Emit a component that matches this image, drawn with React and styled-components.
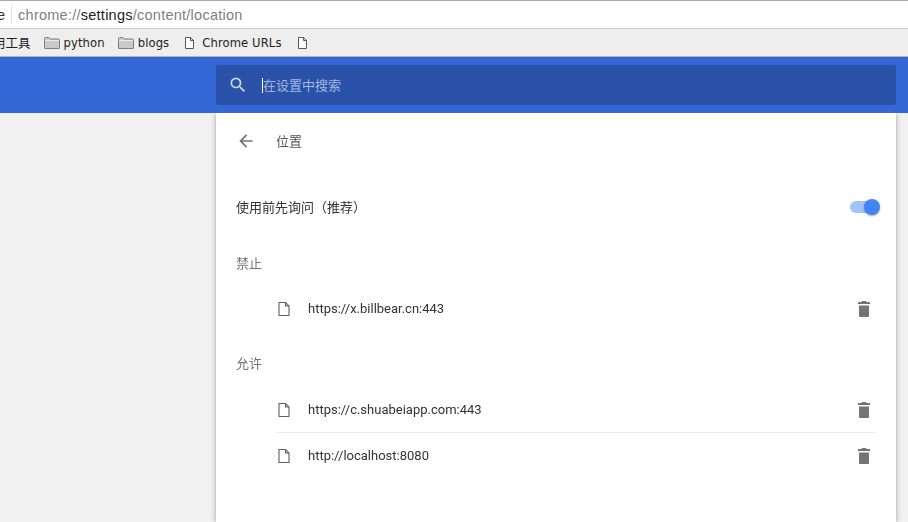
import React from "react";
import styled, { createGlobalStyle } from "styled-components";

const cjk = `Roboto, "Noto Sans CJK SC", sans-serif`;

const GlobalStyle = createGlobalStyle`
  html, body {
    margin: 0;
    padding: 0;
    height: 100%;
    overflow: hidden;
    background: #f1f1f1;
    font-family: ${cjk};
  }
`;

const Page = styled.div`
  display: flex;
  flex-direction: column;
  width: 908px;
  height: 522px;
  overflow: hidden;
  will-change: opacity;
`;

const AddressBar = styled.div`
  display: flex;
  align-items: center;
  flex: none;
  height: 27px;
  background: #fff;
  border-top: 1px solid #a9a9a9;
  border-bottom: 1px solid #cfcfcf;
  overflow: hidden;
`;

const CutOffLabel = styled.span`
  flex: none;
  margin-left: -3px;
  margin-right: 6px;
  font-family: "Liberation Sans", sans-serif;
  font-size: 14.500px;
  color: #333;
`;

const Divider = styled.span`
  flex: none;
  width: 1px;
  height: 19px;
  margin-right: 6px;
  background: #e2e2e2;
`;

const Url = styled.span`
  font-family: "Liberation Sans", sans-serif;
  font-size: 14.500px;
  letter-spacing: 0.25px;
  color: #808080;

  b {
    font-weight: 400;
    color: #222;
  }
`;

const BookmarksBar = styled.div`
  display: flex;
  align-items: center;
  flex: none;
  height: 27px;
  background: #eeeeee;
  border-bottom: 1px solid #b5b5b5;
  overflow: hidden;
  font-family: "DejaVu Sans", "Noto Sans CJK SC", sans-serif;
  font-size: 11.600px;
  letter-spacing: 0.1px;
  color: #222;
`;

const Bookmark = styled.div`
  display: flex;
  align-items: center;
  flex: none;
  gap: ${(p) => p.$gap || 4}px;
  margin-left: ${(p) => p.$left || 0}px;
`;

const CutOffBookmark = styled.div`
  flex: none;
  margin-left: -7px;
  font-size: 12.500px;
  letter-spacing: 0;
`;

const Header = styled.header`
  position: relative;
  z-index: 1;
  display: flex;
  justify-content: flex-end;
  align-items: flex-start;
  flex: none;
  height: 48px;
  padding: 8px 12px 0 0;
  background: #3367d6;
`;

const Search = styled.div`
  display: flex;
  align-items: center;
  width: 680px;
  height: 40px;
  border-radius: 2px;
  background: #2a52a8;
`;

const SearchIconWrap = styled.span`
  display: flex;
  margin: 0 14px 0 12px;
  color: #cfd8ee;
`;

const Caret = styled.span`
  width: 1px;
  height: 15px;
  background: #fff;
`;

const Placeholder = styled.span`
  margin-top: -2px;
  font-size: 13px;
  color: #a3b6e0;
`;

const Content = styled.div`
  display: flex;
  justify-content: flex-end;
  flex: 1;
  padding-right: 12px;
`;

const Card = styled.main`
  display: flex;
  flex-direction: column;
  width: 680px;
  background: #fff;
  box-shadow: 0 1px 5px rgba(0, 0, 0, 0.35);
`;

const SubpageTitle = styled.div`
  display: flex;
  align-items: center;
  flex: none;
  height: 56px;
  padding-left: 20px;
  font-size: 13px;
  color: #555;

  span {
    margin-top: -2px;
  }
`;

const BackIcon = styled.svg`
  width: 20px;
  height: 20px;
  margin-right: 20px;
  color: #757575;
`;

const ToggleRow = styled.div`
  display: flex;
  align-items: center;
  justify-content: space-between;
  flex: none;
  height: 48px;
  margin-top: 14px;
  padding: 0 18px 0 20px;
  font-size: 13px;
  color: #333;

  span {
    margin-top: -2px;
  }
`;

const Track = styled.div`
  position: relative;
  width: 28px;
  height: 12px;
  border-radius: 6px;
  background: #a1c2fa;
`;

const Knob = styled.i`
  position: absolute;
  top: -2px;
  right: -2px;
  width: 16px;
  height: 16px;
  border-radius: 50%;
  background: #4285f4;
  box-shadow: 0 1px 2px rgba(0, 0, 0, 0.35);
`;

const SectionLabel = styled.div`
  flex: none;
  margin-top: ${(p) => p.$top}px;
  padding-left: 20px;
  height: 20px;
  line-height: 20px;
  font-size: 13px;
  color: #757575;
`;

const SiteList = styled.div`
  display: flex;
  flex-direction: column;
  margin: ${(p) => p.$top}px 20px 0 60px;
`;

const SiteRow = styled.div`
  display: flex;
  align-items: center;
  height: 45px;
  border-top: ${(p) => (p.$divided ? "1px solid #ebebeb" : "none")};
  font-size: 13px;
  color: #333;
`;

const SiteIcon = styled.svg`
  flex: none;
  width: 16px;
  height: 16px;
  margin-right: 16px;
  color: #5f5f5f;
`;

const SiteUrl = styled.span`
  flex: 1;
`;

const TrashIcon = styled.svg`
  flex: none;
  width: 12px;
  height: 16px;
  margin-right: 6px;
  color: #757575;
`;

const FolderIcon = () => (
  <svg width="16" height="12" viewBox="0 0 16 12">
    <path d="M0.500 11V1.500q0-1 1-1h3.500l1.500 1.500h8q1 0 1 1v8q0 .5-.5.5h-14q-.5 0-.5-.5z" fill="#c9c9c9" stroke="#808080" />
    <path d="M1 3.500h14" stroke="#ececec" />
  </svg>
);

const PageIcon = () => (
  <svg width="9" height="12" viewBox="0 0 9 12" fill="#fff" stroke="#555">
    <path d="M0.500 0.500h5l3 3v8h-8z" />
    <path d="M5.500 0.500v3h3" fill="none" />
  </svg>
);

const DocIcon = () => (
  <SiteIcon viewBox="0 0 16 16" fill="none" stroke="currentColor" strokeWidth="1.100">
    <path d="M3 1.500h6.500l3.500 3.500v9.500h-10z" />
    <path d="M9.500 1.500v3.500h3.500" />
  </SiteIcon>
);

const Trash = () => (
  <TrashIcon viewBox="0 0 12 16" fill="currentColor">
    <path d="M4 0h4l.5 1H12v2H0V1h3.500z" />
    <path d="M1 4.500h10V15q0 1-1 1H2q-1 0-1-1z" />
  </TrashIcon>
);

const sections = [
  { label: "禁止", labelTop: 23, listTop: 12, sites: ["https://x.billbear.cn:443"] },
  { label: "允许", labelTop: 23, listTop: 13, sites: ["https://c.shuabeiapp.com:443", "http://localhost:8080"] },
];

export default function App() {
  return (
    <Page>
      <GlobalStyle />
      <AddressBar>
        <CutOffLabel>e</CutOffLabel>
        <Divider />
        <Url>
          chrome://<b>settings</b>/content/location
        </Url>
      </AddressBar>
      <BookmarksBar>
        <CutOffBookmark>用工具</CutOffBookmark>
        <Bookmark $left={13}>
          <FolderIcon />
          python
        </Bookmark>
        <Bookmark $left={13}>
          <FolderIcon />
          blogs
        </Bookmark>
        <Bookmark $left={16} $gap={8}>
          <PageIcon />
          Chrome URLs
        </Bookmark>
        <Bookmark $left={16}>
          <PageIcon />
        </Bookmark>
      </BookmarksBar>
      <Header>
        <Search>
          <SearchIconWrap>
            <svg width="20" height="20" viewBox="0 0 24 24" fill="currentColor">
              <path d="M15.500 14h-.79l-.28-.27A6.470 6.470 0 0 0 16 9.500 6.500 6.500 0 1 0 9.500 16c1.610 0 3.090-.59 4.230-1.570l.27.28v.79l5 4.990L20.490 19l-4.990-5zm-6 0C7.010 14 5 11.990 5 9.500S7.010 5 9.500 5 14 7.010 14 9.500 11.990 14 9.500 14z" />
            </svg>
          </SearchIconWrap>
          <Caret />
          <Placeholder>在设置中搜索</Placeholder>
        </Search>
      </Header>
      <Content>
        <Card>
          <SubpageTitle>
            <BackIcon viewBox="0 0 24 24" fill="currentColor">
              <path d="M20 11H7.830l5.590-5.590L12 4l-8 8 8 8 1.410-1.410L7.830 13H20v-2z" />
            </BackIcon>
            <span>位置</span>
          </SubpageTitle>
          <ToggleRow>
            <span>使用前先询问（推荐）</span>
            <Track>
              <Knob />
            </Track>
          </ToggleRow>
          {sections.map((section) => (
            <React.Fragment key={section.label}>
              <SectionLabel $top={section.labelTop}>{section.label}</SectionLabel>
              <SiteList $top={section.listTop}>
                {section.sites.map((site, i) => (
                  <SiteRow key={site} $divided={i > 0}>
                    <DocIcon />
                    <SiteUrl>{site}</SiteUrl>
                    <Trash />
                  </SiteRow>
                ))}
              </SiteList>
            </React.Fragment>
          ))}
        </Card>
      </Content>
    </Page>
  );
}
